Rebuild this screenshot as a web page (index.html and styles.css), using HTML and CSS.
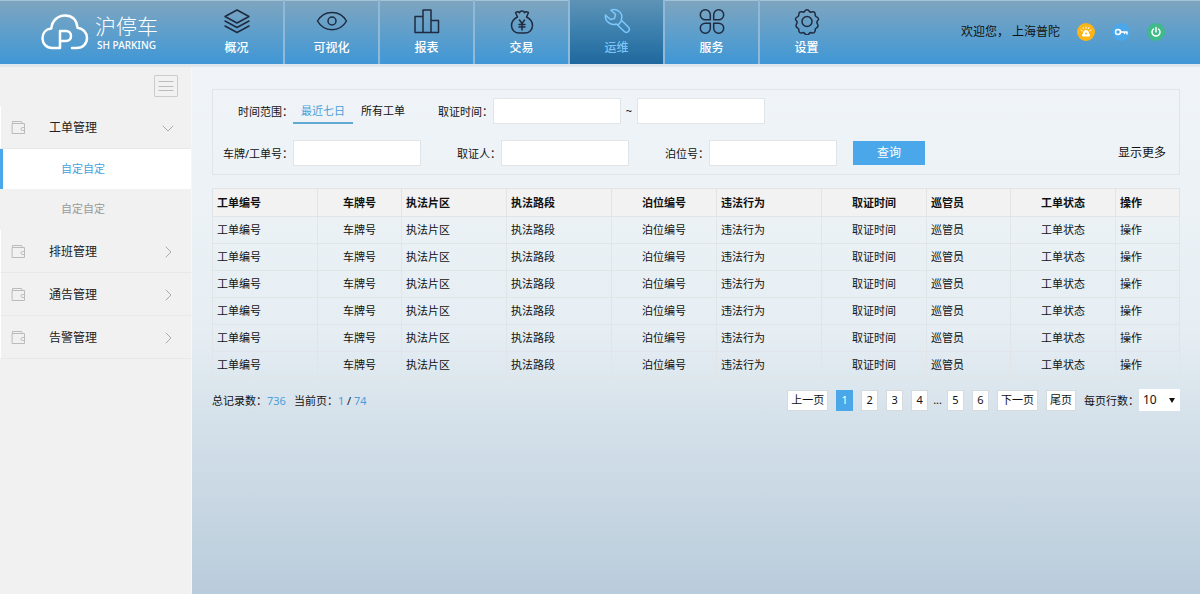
FILE: index.html
```html
<!DOCTYPE html>
<html lang="zh-CN">
<head>
<meta charset="utf-8">
<title>沪停车</title>
<link rel="stylesheet" href="styles.css">
</head>
<body>
<svg class="defs" aria-hidden="true">
  <symbol id="wallet" viewBox="0 0 16 16"><path d="M2.500 3.500h12v10h-12zM2.500 3.500v-2h9l1 2M14.500 7.500h-2a1.500 1.500 0 0 0 0 3h2"/></symbol>
  <symbol id="right" viewBox="0 0 12 12"><path d="M4 1l5 5-5 5"/></symbol>
</svg>
<header class="topbar">
  <div class="brand">
    <svg class="logo" viewBox="0 0 48 36" aria-hidden="true"><path d="M19 34H11C5.500 34 1.500 29.500 1.500 24.500c0-5.500 3.500-9.500 8.800-10C11 6.500 17 1.500 24 1.500c6.500 0 11.500 4 12.600 12.300C42 14.500 46 18.500 46 24c0 5.500-4 10-10.500 10H31M19 34V17h6c3 0 5 2 5 5s-2 5-5 5h-5"/></svg>
    <div class="names"><span class="name">沪停车</span><span class="latin">SH PARKING</span></div>
  </div>
  <nav class="nav">
    <a class="tab" href="#"><svg viewBox="0 0 28 28"><path d="M14 3l12 6.500-12 6.500L2 9.500zM2 14l12 6.500L26 14M2 19l12 6.500L26 19"/></svg>概况</a>
    <a class="tab" href="#"><svg class="wide" viewBox="0 0 32 28"><path d="M1.500 14C8 2.500 24 2.500 30.500 14 24 25.500 8 25.500 1.500 14z"/><circle cx="16" cy="14" r="4"/></svg>可视化</a>
    <a class="tab" href="#"><svg viewBox="0 0 28 28"><path d="M2 9.500h8v16H2zM10 3h8v22.500h-8zM18 13.500h7.500v12H18z"/></svg>报表</a>
    <a class="tab" href="#"><svg viewBox="0 0 28 28"><path d="M9.500 10C5.500 12 3.500 15 3.500 18.500c0 4.500 3.500 7.500 7.500 7.500h6c4 0 7.500-3 7.500-7.500 0-3.500-2-6.500-6-8.500M9.500 10l-2-4.500c1.500-1 3-1 4 .3C12 3.500 16 3.500 16.500 5.800c1-1.300 2.500-1.300 4-.3l-2 4.500M11.500 13l2.500 3.500 2.500-3.500M14 16.500V23M11 17.500h6M11 20h6"/></svg>交易</a>
    <a class="tab active" href="#"><svg viewBox="0 0 28 28"><path d="M8 3.200c4-1.700 9 .3 10.500 4.300.7 2 .4 3.700-.3 5.500l7.300 7.300c2.500 2.700-1.500 7-4.200 4.200L13.500 17c-5.500 2-12-2.500-11-9l5 4.500 4-1 1-4.200zM15.500 17.500l3-3.500"/></svg>运维</a>
    <a class="tab" href="#"><svg viewBox="0 0 28 28"><path d="M12.300 12.800H7.600a5 5 0 1 1 4.700-4.900zM15.700 12.800h4.700a5 5 0 1 0-4.700-4.900zM12.300 16.200H7.600a5 5 0 1 0 4.700 4.900zM15.700 16.200h4.700a5 5 0 1 1-4.700 4.900z"/></svg>服务</a>
    <a class="tab" href="#"><svg viewBox="0 0 28 28"><path d="M11.500 4.500q2.500-3.500 5 0 .7 1 2 .4 3.800-.9 3.700 3 0 1 1 1.700 3.900 1.900 1.200 4.400-1 1 0 2.700 1.500 3.500-1.200 4.400-1 .5-1 1.700.1 3.900-3.700 3-1.300-.5-2 .4-2.500 3.500-5 0-.7-.9-2-.4-3.800.9-3.700-3 0-1.200-1-1.700-2.700-.9-1.200-4.400 1-1.700 0-2.700-2.700-2.500 1.200-4.400 1-.7 1-1.700-.1-3.900 3.700-3 1.300.6 2-.4z"/><circle cx="14" cy="14.500" r="5"/></svg>设置</a>
  </nav>
  <div class="user">
    <span class="welcome">欢迎您， 上海普陀</span>
    <button class="round alarm" aria-label="告警"><svg viewBox="0 0 18 18"><path class="solid" d="M6.500 11.500V10a2.500 2.500 0 0 1 5 0v1.500h1V13h-7v-1.500z"/><path d="M9 4v1.500M6 4.500l.8 1.300M12 4.500l-.8 1.300M4 7l1.200.8M14 7l-1.200.8"/><circle class="dot" cx="9" cy="10.500" r="1"/></svg></button>
    <button class="round key" aria-label="密码"><svg viewBox="0 0 18 18"><circle cx="6" cy="9" r="2.500"/><path d="M8.500 9H15v2M12.500 9v1.500"/></svg></button>
    <button class="round power" aria-label="退出"><svg viewBox="0 0 18 18"><path d="M6.500 6a4 4 0 1 0 5 0M9 4.500V9"/></svg></button>
  </div>
</header>
<div class="body">
  <aside class="side">
    <div class="tools"><button class="fold" aria-label="收起菜单"><svg viewBox="0 0 16 14"><path d="M1 2.500h14M1 7.500h14M1 11.500h14"/></svg></button></div>
    <nav class="menu">
      <a class="item" href="#"><svg class="wallet"><use href="#wallet"/></svg><span>工单管理</span><svg class="arrow" viewBox="0 0 12 12"><path d="M1 4l5 5 5-5"/></svg></a>
      <a class="sub current" href="#">自定自定</a>
      <a class="sub" href="#">自定自定</a>
      <a class="item" href="#"><svg class="wallet"><use href="#wallet"/></svg><span>排班管理</span><svg class="arrow"><use href="#right"/></svg></a>
      <a class="item" href="#"><svg class="wallet"><use href="#wallet"/></svg><span>通告管理</span><svg class="arrow"><use href="#right"/></svg></a>
      <a class="item" href="#"><svg class="wallet"><use href="#wallet"/></svg><span>告警管理</span><svg class="arrow"><use href="#right"/></svg></a>
    </nav>
  </aside>
  <main class="main">
    <form class="filter">
      <div class="line">
        <span class="label">时间范围<span class="colon">：</span></span>
        <button type="button" class="range on">最近七日</button>
        <button type="button" class="range">所有工单</button>
        <label class="label" for="from">取证时间<span class="colon">：</span></label><input class="field" id="from" type="text">
        <span class="tilde">~</span><input class="field" id="to" type="text" aria-label="结束时间">
      </div>
      <div class="line">
        <label class="label" for="plate">车牌/工单号<span class="colon">：</span></label><input class="field" id="plate" type="text">
        <label class="label" for="person">取证人<span class="colon">：</span></label><input class="field" id="person" type="text">
        <label class="label" for="berth">泊位号<span class="colon">：</span></label><input class="field" id="berth" type="text">
        <button type="button" class="query">查询</button>
        <a class="more" href="#">显示更多</a>
      </div>
    </form>
    <table class="orders">
      <colgroup><col class="mid"><col class="small"><col class="mid"><col class="mid"><col class="mid"><col class="mid"><col class="mid"><col class="small"><col class="mid"><col class="last"></colgroup>
      <thead><tr><th>工单编号</th><th class="c">车牌号</th><th>执法片区</th><th>执法路段</th><th class="c">泊位编号</th><th>违法行为</th><th class="c">取证时间</th><th>巡管员</th><th class="c">工单状态</th><th>操作</th></tr></thead>
      <tbody>
        <tr><td>工单编号</td><td class="c">车牌号</td><td>执法片区</td><td>执法路段</td><td class="c">泊位编号</td><td>违法行为</td><td class="c">取证时间</td><td>巡管员</td><td class="c">工单状态</td><td>操作</td></tr>
        <tr><td>工单编号</td><td class="c">车牌号</td><td>执法片区</td><td>执法路段</td><td class="c">泊位编号</td><td>违法行为</td><td class="c">取证时间</td><td>巡管员</td><td class="c">工单状态</td><td>操作</td></tr>
        <tr><td>工单编号</td><td class="c">车牌号</td><td>执法片区</td><td>执法路段</td><td class="c">泊位编号</td><td>违法行为</td><td class="c">取证时间</td><td>巡管员</td><td class="c">工单状态</td><td>操作</td></tr>
        <tr><td>工单编号</td><td class="c">车牌号</td><td>执法片区</td><td>执法路段</td><td class="c">泊位编号</td><td>违法行为</td><td class="c">取证时间</td><td>巡管员</td><td class="c">工单状态</td><td>操作</td></tr>
        <tr><td>工单编号</td><td class="c">车牌号</td><td>执法片区</td><td>执法路段</td><td class="c">泊位编号</td><td>违法行为</td><td class="c">取证时间</td><td>巡管员</td><td class="c">工单状态</td><td>操作</td></tr>
        <tr><td>工单编号</td><td class="c">车牌号</td><td>执法片区</td><td>执法路段</td><td class="c">泊位编号</td><td>违法行为</td><td class="c">取证时间</td><td>巡管员</td><td class="c">工单状态</td><td>操作</td></tr>
      </tbody>
    </table>
    <div class="foot">
      <div class="totals"><span>总记录数<span class="colon">：</span><b>736</b></span><span>当前页<span class="colon">：</span><b>1</b> / <b>74</b></span></div>
      <div class="pager">
        <button class="page">上一页</button><button class="page now">1</button><button class="page">2</button><button class="page">3</button><button class="page">4</button><span class="dots">...</span><button class="page">5</button><button class="page">6</button><button class="page">下一页</button><button class="page">尾页</button>
        <div class="size"><label for="rows">每页行数<span class="colon">：</span></label><div class="pick"><select id="rows"><option>10</option></select></div></div>
      </div>
    </div>
  </main>
</div>
</body>
</html>
```

FILE: styles.css
```css
* { box-sizing: border-box; }
body {
  margin: 0;
  min-height: 100vh;
  display: flex;
  flex-direction: column;
  font: 11px/16px "Noto Sans", "Noto Sans CJK SC", sans-serif;
  color: #111;
}
button, input, select { font: inherit; color: inherit; margin: 0; }
button { padding: 0; border: 0; background: none; cursor: pointer; }
a { color: inherit; text-decoration: none; }
svg { fill: none; stroke: currentColor; stroke-linecap: round; stroke-linejoin: round; }
.defs { display: none; }
.colon { font-family: "Noto Sans CJK TC", sans-serif; }

/* Header */
.topbar {
  display: flex;
  height: 67px;
  border-bottom: 3px solid #dfe6ec;
  background: linear-gradient(#7fa5bf, #5f9fcb 50%, #3f97d6);
  box-shadow: inset 0 1px #a2c3d8;
}
.brand { width: 190px; display: flex; align-items: center; padding-left: 41px; gap: 6px; color: #fff; }
.logo { width: 48px; height: 36px; stroke-width: 2.5; }
.names { display: flex; flex-direction: column; padding-top: 2px; }
.name { font-size: 21px; line-height: 24px; font-weight: 300; }
.latin { padding-left: 2px; font-size: 10px; line-height: 14px; font-weight: 500; }
.nav { display: flex; }
.tab {
  width: 95px;
  display: flex;
  flex-direction: column;
  align-items: center;
  padding-top: 7px;
  gap: 4px;
  font-size: 12px;
  line-height: 18px;
  font-weight: 500;
  color: #fff;
  border-right: 2px solid;
  border-image: linear-gradient(90deg, #4d82a8 50%, #8fb9d6 50%) 1;
}
.tab:last-child { border-right-color: transparent; border-image: none; }
.tab svg { width: 28px; height: 28px; stroke: #1f2b40; stroke-width: 1.5; }
.tab .wide { width: 32px; }
.tab.active { color: #7cc4f5; background: linear-gradient(#5f93b5, #3a7fae 50%, #1f689e); }
.tab.active svg { stroke: #7cc8fb; }
.user { margin-left: auto; padding-right: 35px; display: flex; align-items: center; gap: 17px; font-size: 12px; }
.round { width: 18px; height: 18px; border-radius: 50%; color: #fff; }
.round svg { display: block; width: 18px; height: 18px; stroke-width: 1.5; }
.alarm { background: #fdb515; }
.alarm svg { stroke-width: 1; }
.alarm .solid { fill: #fff; }
.alarm .dot { fill: #fdb515; stroke: none; }
.key { background: #4aa7ea; }
.power { background: #3fba88; }

/* Sidebar */
.body { flex: 1; display: flex; }
.side { width: 192px; background: #f1f1f1; border-right: 1px solid #f5f6f7; }
.tools { display: flex; justify-content: flex-end; padding: 8px 13px 9px; }
.fold { width: 24px; height: 22px; border: 1px solid #ccc; border-radius: 1px; color: #bbb; }
.fold svg { display: block; width: 16px; height: 14px; margin: auto; }
.item {
  height: 43px;
  display: flex;
  align-items: center;
  padding: 2px 17px 0 9px;
  border-left: 1px solid #fff;
  border-bottom: 1px solid #e8e8e8;
  font-size: 12px;
  color: #222;
}
.item span { flex: 1; margin-left: 23px; }
.wallet { width: 16px; height: 16px; color: #bbb; }
.arrow { width: 12px; height: 12px; color: #aaa; }
.sub { display: block; height: 40px; padding-left: 61px; line-height: 40px; color: #999; }
.current { padding-left: 58px; border-left: 3px solid #4aa7ea; background: #fff; color: #4a9fd8; }
.sub + .item { margin-top: 1px; }

/* Content */
.main {
  flex: 1;
  min-width: 0;
  padding: 22px 20px;
  background: linear-gradient(#f0f4f9, #ecf2f6 25%, #e6eef3 50%, #d5e1ea 67%, #b9ccdb);
}
.filter { border: 1px solid #e2e5e8; padding: 8px 13px 8px 0; display: flex; flex-direction: column; gap: 16px; }
.line { display: flex; align-items: center; height: 26px; }
.label { width: 80px; text-align: right; white-space: nowrap; }
.range { width: 60px; height: 26px; padding-top: 2px; border-bottom: 2px solid transparent; }
.range.on { color: #4a9fd8; border-color: #5fa9d3; }
.field { width: 128px; height: 26px; padding: 0 6px; border: 1px solid #e2e5e8; background: #fff; }
.tilde { width: 16px; text-align: center; }
.query { width: 72px; height: 24px; margin-left: 16px; background: #4aa7ea; color: #fff; font-size: 12px; }
.more { margin-left: auto; font-size: 12px; }
.orders { width: 100%; margin-top: 13px; border-collapse: collapse; table-layout: fixed; }
.orders th, .orders td { height: 27px; padding: 0 4px; border: 1px solid #e2e5e8; text-align: left; }
.orders th { height: 28px; background: #f2f2f2; font-weight: 700; }
.orders .c { text-align: center; }
.mid { width: 105px; }
.small { width: 84px; }
.last { width: 64px; }

.foot { display: flex; justify-content: space-between; margin-top: 10px; }
.totals { display: flex; gap: 8px; height: 22px; align-items: center; }
.totals b { font-weight: 400; color: #4a9fd8; }
.pager { display: flex; align-items: center; gap: 8px; }
.page { min-width: 17px; height: 21px; padding: 0 3px; border: 1px solid #d3dae0; background: #fff; }
.page.now { background: #4aa7ea; border-color: #4aa7ea; color: #fff; }
.dots { margin: 0 -3px; }
.size { display: flex; align-items: center; }
.pick { width: 41px; display: grid; align-items: center; background: #fff; }
.pick select { grid-area: 1 / 1; width: 100%; height: 22px; padding: 0 4px; border: 0; border-radius: 0; background: none; appearance: none; font-size: 12px; }
.pick::after { content: ""; grid-area: 1 / 1; justify-self: end; margin-right: 5px; border: 3px solid transparent; border-top: 5px solid #111; border-bottom: 0; pointer-events: none; }
```
